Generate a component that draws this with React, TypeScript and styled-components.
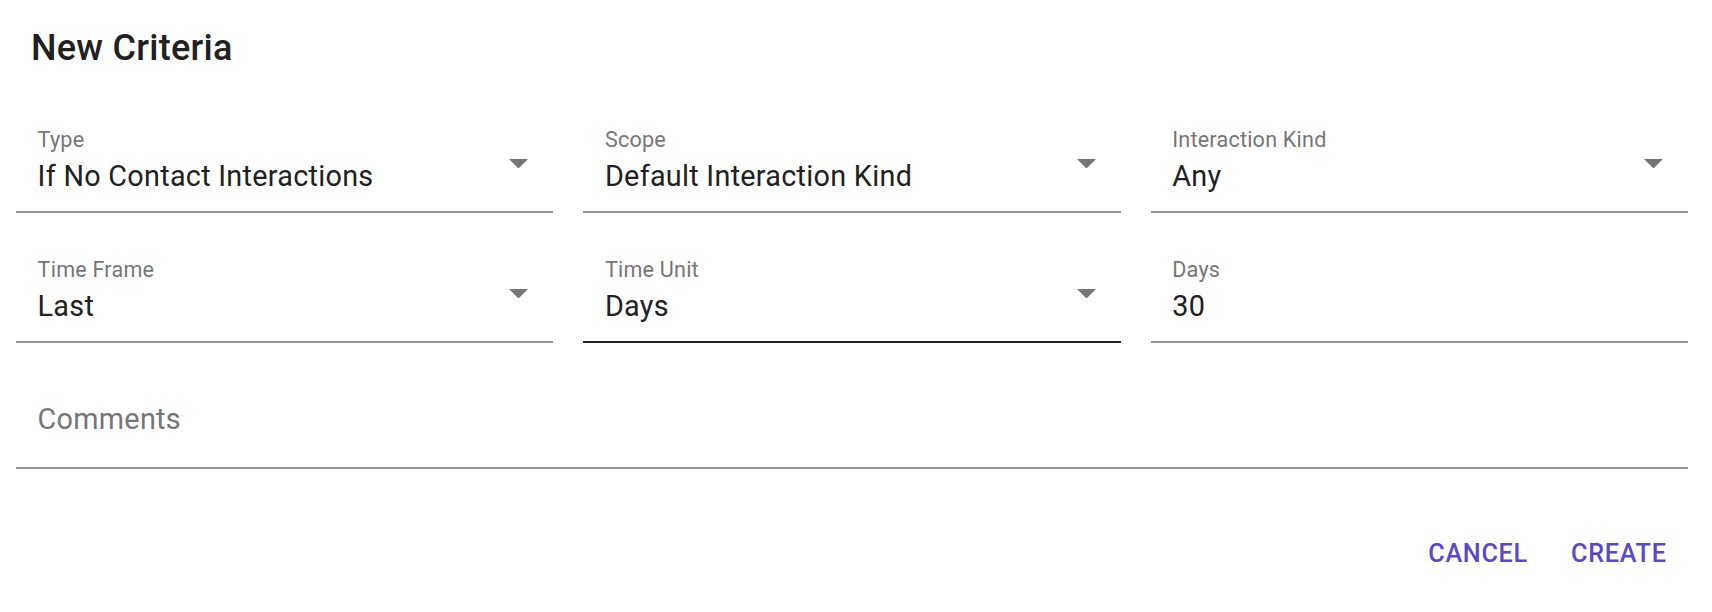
import styled, { createGlobalStyle } from 'styled-components'

type Field = {
  label: string
  value: string
  select?: boolean
  hovered?: boolean
}

const fields: Field[] = [
  { label: 'Type', value: 'If No Contact Interactions', select: true },
  { label: 'Scope', value: 'Default Interaction Kind', select: true },
  { label: 'Interaction Kind', value: 'Any', select: true },
  { label: 'Time Frame', value: 'Last', select: true },
  { label: 'Time Unit', value: 'Days', select: true, hovered: true },
  { label: 'Days', value: '30' },
]

const GlobalStyle = createGlobalStyle`
  body {
    margin: 0;
    background: #ffffff;
    font-family: Roboto, "Liberation Sans", Arial, sans-serif;
    color: #212121;
  }
`

const Dialog = styled.div`
  width: 1712px;
  height: 612px;
  display: flex;
  flex-direction: column;
  background: #ffffff;
`

const Title = styled.h2`
  margin: 0;
  padding: 20px 0 0 31px;
  font-size: 36px;
  font-weight: 500;
  line-height: 57.6px;
  letter-spacing: 0.27px;
  color: #212121;
`

const Form = styled.div`
  display: grid;
  grid-template-columns: repeat(3, 1fr);
  column-gap: 30px;
  row-gap: 45.5px;
  padding: 51px 24px 0 16px;
`

const FieldBox = styled.div<{ $hovered?: boolean }>`
  position: relative;
  display: flex;
  flex-direction: column;
  padding: 0 60px 14px 21.6px;
  border-bottom: 2px solid ${(p) => (p.$hovered ? '#212121' : '#949494')};
`

const Label = styled.label`
  font-size: 21.6px;
  line-height: 21.6px;
  letter-spacing: 0.2px;
  color: #767676;
  height: 27px;
`

const Value = styled.div`
  font-size: 28.8px;
  line-height: 41.4px;
  letter-spacing: 0.27px;
  color: #212121;
  white-space: nowrap;
`

const Arrow = styled.svg`
  position: absolute;
  right: 25px;
  top: 30px;
  width: 19px;
  height: 9.5px;
`

const CommentsBox = styled.div`
  grid-column: 1 / -1;
  padding: 10.8px 21.6px 26.5px;
  border-bottom: 2px solid #949494;
`

const Placeholder = styled.div`
  font-size: 28.8px;
  line-height: 41.4px;
  letter-spacing: 0.27px;
  color: #767676;
`

const Actions = styled.div`
  display: flex;
  justify-content: flex-end;
  gap: 14.4px;
  padding: 52px 31px 0 0;
`

const Button = styled.button`
  border: none;
  background: transparent;
  padding: 10.8px 14.4px;
  font-family: Roboto, "Liberation Sans", Arial, sans-serif;
  font-size: 25.2px;
  font-weight: 500;
  line-height: 44.1px;
  letter-spacing: 0.72px;
  text-transform: uppercase;
  color: #5a47c9;
  cursor: pointer;
`

const DropArrow = () => (
  <Arrow viewBox="0 0 19 9.5">
    <path d="M0 0 L19 0 L9.5 9.5 Z" fill="#757575" />
  </Arrow>
)

export default function App() {
  return (
    <>
      <GlobalStyle />
      <Dialog>
        <Title>New Criteria</Title>
        <Form>
          {fields.map((f) => (
            <FieldBox key={f.label} $hovered={f.hovered}>
              <Label>{f.label}</Label>
              <Value>{f.value}</Value>
              {f.select && <DropArrow />}
            </FieldBox>
          ))}
          <CommentsBox>
            <Placeholder>Comments</Placeholder>
          </CommentsBox>
        </Form>
        <Actions>
          <Button>Cancel</Button>
          <Button>Create</Button>
        </Actions>
      </Dialog>
    </>
  )
}
